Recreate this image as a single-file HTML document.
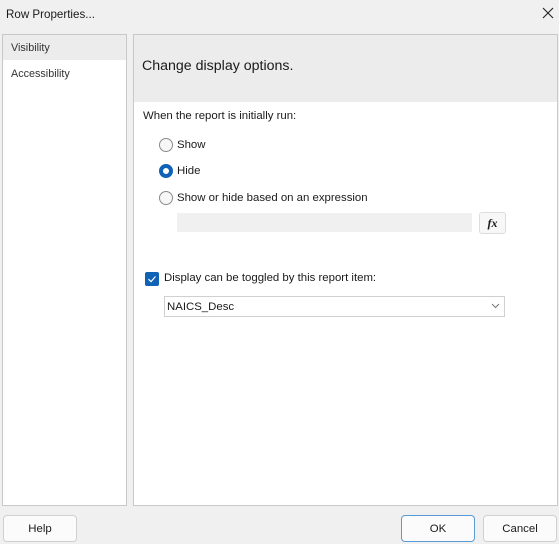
<!DOCTYPE html>
<html><head><meta charset="utf-8"><style>
*{box-sizing:border-box;margin:0;padding:0}
body{width:559px;height:544px;background:#f0f0f0;font-family:"Segoe UI","Liberation Sans",sans-serif;font-size:11.4px;color:#1a1a1a;position:relative;overflow:hidden}
.a{position:absolute}
.btn{position:absolute;top:515px;height:27px;background:#fbfbfb;border:1px solid #d0d0d0;border-radius:4px;text-align:center;line-height:26px;font-size:11.4px}
.radio{position:absolute;width:14px;height:14px;border-radius:50%;border:1px solid #8a8a8a;background:#f7f7f7}
</style></head><body>
<div class="a" style="left:6px;top:8px;font-size:11.6px">Row Properties...</div>
<svg class="a" style="left:542px;top:7px" width="12" height="12"><path d="M1 1L11 11M11 1L1 11" stroke="#222" stroke-width="1.1"/></svg>

<div class="a" style="left:2px;top:34px;width:125px;height:472px;background:#fff;border:1px solid #c8c8c8"></div>
<div class="a" style="left:3px;top:35px;width:123px;height:25px;background:#ececec"></div>
<div class="a" style="left:11px;top:42px;font-size:10.8px;color:#333">Visibility</div>
<div class="a" style="left:11px;top:68px;font-size:10.8px;color:#333">Accessibility</div>

<div class="a" style="left:133px;top:34px;width:425px;height:472px;background:#fff;border:1px solid #c8c8c8"></div>
<div class="a" style="left:134px;top:35px;width:423px;height:67px;background:#ececec"></div>
<div class="a" style="left:142px;top:58px;font-size:14.2px;color:#1a1a1a">Change display options.</div>
<div class="a" style="left:143px;top:110px">When the report is initially run:</div>

<div class="radio" style="left:159px;top:138px"></div>
<div class="a" style="left:177px;top:139px">Show</div>
<div class="radio" style="left:159px;top:164px;border:4px solid #0f62b5;background:#fff"></div>
<div class="a" style="left:177px;top:165px">Hide</div>
<div class="radio" style="left:159px;top:191px"></div>
<div class="a" style="left:177px;top:192px">Show or hide based on an expression</div>

<div class="a" style="left:177px;top:213px;width:295px;height:19px;background:#f0f0f0"></div>
<div class="a" style="left:479px;top:212px;width:27px;height:22px;border:1px solid #ddd;border-radius:3px;background:#f7f7f7;text-align:center;font-family:'Liberation Serif',serif;font-style:italic;font-weight:bold;font-size:12px;line-height:20px">fx</div>

<div class="a" style="left:145px;top:272px;width:14px;height:14px;background:#0f62b5;border-radius:2px"></div>
<svg class="a" style="left:145px;top:272px" width="14" height="14"><path d="M3.5 7.2L6 9.6L10.5 4.5" stroke="#fff" stroke-width="1.2" fill="none"/></svg>
<div class="a" style="left:164px;top:272px">Display can be toggled by this report item:</div>

<div class="a" style="left:164px;top:296px;width:341px;height:21px;border:1px solid #d0d0d0;background:#fff"></div>
<div class="a" style="left:167px;top:301px">NAICS_Desc</div>
<svg class="a" style="left:491px;top:303px" width="9" height="6"><path d="M1 1L4.5 4.5L8 1" stroke="#777" fill="none"/></svg>

<div class="btn" style="left:3px;width:74px">Help</div>
<div class="btn" style="left:401px;width:74px;border:1px solid #5b9bd5">OK</div>
<div class="btn" style="left:483px;width:74px">Cancel</div>
</body></html>
